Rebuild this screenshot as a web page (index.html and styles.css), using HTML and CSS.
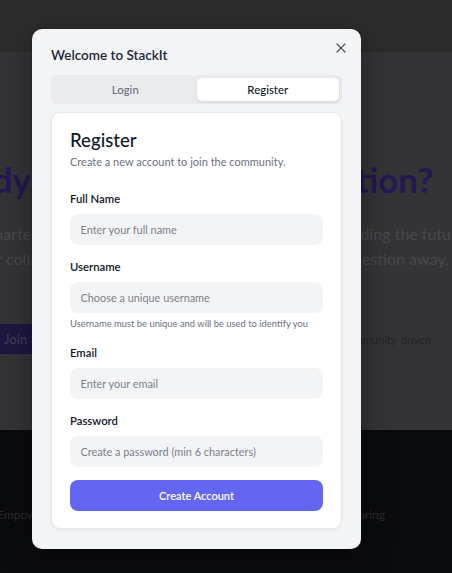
FILE: index.html
```html
<!DOCTYPE html>
<html lang="en">
<head>
<meta charset="utf-8">
<title>StackIt</title>
<link rel="stylesheet" href="styles.css">
</head>
<body>
<div class="page">
  <header class="site-header"></header>
  <section class="hero">
    <h1 class="hero-title cut-line">
      <span class="cut-start">Ready</span><span class="cut-mid">for your next</span><span class="cut-end">question?</span>
    </h1>
    <p class="hero-text">
      <span class="cut-line line-a"><span class="cut-start">Discover a smarter</span><span class="cut-mid">way to learn and share while</span><span class="cut-end">building the future of code</span></span>
      <span class="cut-line line-b"><span class="cut-start">Your collaborative</span><span class="cut-mid">learning journey is just one</span><span class="cut-end">question away.</span></span>
    </p>
    <div class="hero-actions">
      <a class="join-btn" href="#">Join StackIt</a>
      <span class="hero-note">Free, open and community-driven</span>
    </div>
  </section>
  <footer class="site-footer">
    <p class="footer-text cut-line"><span class="cut-start">Empowering</span><span class="cut-mid">developers through collaborative knowledge</span><span class="cut-end">sharing</span></p>
  </footer>
</div>

<div class="modal" role="dialog" aria-labelledby="modal-title">
  <button class="close-btn" aria-label="Close">
    <svg viewBox="0 0 24 24" width="16" height="16" fill="none" stroke="currentColor" stroke-width="1.8" stroke-linecap="round" stroke-linejoin="round"><path d="M18 6 6 18"/><path d="m6 6 12 12"/></svg>
  </button>
  <h2 class="modal-title" id="modal-title">Welcome to StackIt</h2>
  <div class="tabs">
    <button class="tab">Login</button>
    <button class="tab tab-active">Register</button>
  </div>
  <div class="card">
    <h3 class="card-title">Register</h3>
    <p class="card-sub">Create a new account to join the community.</p>
    <form class="form">
      <div class="field">
        <label class="label">Full Name</label>
        <input class="input" type="text" placeholder="Enter your full name">
      </div>
      <div class="field">
        <label class="label">Username</label>
        <input class="input" type="text" placeholder="Choose a unique username">
        <p class="help">Username must be unique and will be used to identify you</p>
      </div>
      <div class="field">
        <label class="label">Email</label>
        <input class="input" type="email" placeholder="Enter your email">
      </div>
      <div class="field">
        <label class="label">Password</label>
        <input class="input" type="password" placeholder="Create a password (min 6 characters)">
      </div>
      <button class="submit" type="button">Create Account</button>
    </form>
  </div>
</div>
</body>
</html>
```

FILE: styles.css
```css
* { box-sizing: border-box; }

html, body {
  margin: 0;
  padding: 0;
}

body {
  width: 452px;
  height: 573px;
  overflow: hidden;
  font-family: Lato, "Noto Sans", sans-serif;
  background: #0a0b0e;
  position: relative;
}

/* ---------- background page (dimmed by overlay) ---------- */
.page {
  display: flex;
  flex-direction: column;
  height: 573px;
  overflow: hidden;
}

.site-header {
  height: 52px;
  background: #2c2c2d;
}

.hero {
  height: 378px;
  background: #343437;
  padding-top: 106.5px;
  display: flex;
  flex-direction: column;
  overflow: hidden;
}

/* lines whose middle lies under the dialog */
.cut-line {
  display: flex;
  white-space: nowrap;
}

.cut-start {
  display: flex;
  justify-content: flex-end;
}

.cut-mid {
  display: flex;
  justify-content: center;
  overflow: hidden;
}

.cut-start, .cut-mid, .cut-end {
  flex: none;
}

.hero-title {
  margin: 0;
  font-size: 35px;
  line-height: 40px;
  font-weight: 700;
  color: #251752;
}

.hero-title .cut-start { width: 31px; }
.hero-title .cut-mid { width: 251px; }

.hero-text {
  margin: 22.5px 0 0;
  display: flex;
  flex-direction: column;
  font-size: 16px;
  line-height: 25px;
  color: #47474c;
}

.line-a .cut-start { width: 37px; }
.line-a .cut-mid { width: 298px; }

.line-b .cut-start { width: 96px; }
.line-b .cut-mid { width: 248px; }

.hero-actions {
  margin: 53.3px 21px 0 -14px;
  display: flex;
  align-items: center;
  justify-content: space-between;
}

.join-btn {
  height: 30px;
  padding: 0 18px;
  display: flex;
  align-items: center;
  background: #1e1740;
  color: #3c3955;
  font-size: 13px;
  font-weight: 600;
  text-decoration: none;
  border-radius: 6px;
}

.hero-note {
  font-size: 11px;
  color: #232327;
  white-space: nowrap;
}

.site-footer {
  flex: 1;
  background: #0a0b0e;
  padding-top: 77px;
  overflow: hidden;
}

.footer-text {
  margin: 0;
  font-size: 12px;
  line-height: 16px;
  color: #2a2b31;
}

.footer-text .cut-start { width: 63px; }
.footer-text .cut-mid { width: 284px; }

/* ---------- modal ---------- */
.modal {
  position: absolute;
  left: 32px;
  top: 29px;
  width: 329px;
  padding: 16px 19px 19.5px;
  background: #f3f4f6;
  border-radius: 10px;
  box-shadow: 0 10px 30px rgba(0, 0, 0, 0.35), 0 0 0 1px rgba(0, 0, 0, 0.08);
}

.close-btn {
  position: absolute;
  top: 10.8px;
  right: 11.7px;
  width: 16px;
  height: 16px;
  padding: 0;
  border: 0;
  background: none;
  color: #4b5563;
  display: flex;
}

.modal-title {
  margin: 0;
  font-size: 13.5px;
  line-height: 20px;
  font-weight: 600;
  color: #1f2937;
}

.tabs {
  margin-top: 10px;
  height: 29px;
  padding: 3px;
  display: grid;
  grid-template-columns: 1fr 1fr;
  background: #e9eaee;
  border-radius: 7px;
}

.tab {
  border: 0;
  background: transparent;
  font-family: inherit;
  font-size: 11.4px;
  font-weight: 500;
  color: #6b7280;
  border-radius: 5px;
  padding: 0;
}

.tab-active {
  background: #ffffff;
  color: #111827;
  box-shadow: 0 1px 3px rgba(0, 0, 0, 0.1);
}

.card {
  margin-top: 8px;
  background: #ffffff;
  border: 1px solid #e5e7eb;
  border-radius: 9px;
  padding: 16px 18px 17.5px;
  box-shadow: 0 1px 3px rgba(0, 0, 0, 0.06);
}

.card-title {
  margin: 0;
  font-size: 18.6px;
  line-height: 23px;
  font-weight: 500;
  color: #111827;
}

.card-sub {
  margin: 2.35px 0 0;
  font-size: 11px;
  line-height: 16px;
  color: #6b7280;
}

.form {
  margin-top: 20.6px;
  display: flex;
  flex-direction: column;
  gap: 14px;
}

.field {
  display: flex;
  flex-direction: column;
}

.label {
  font-size: 11.3px;
  line-height: 16px;
  font-weight: 600;
  color: #111827;
  margin-bottom: 7px;
}

.input {
  height: 31px;
  width: 100%;
  padding: 0 10.5px;
  border: 0;
  border-radius: 8px;
  background: #f3f4f6;
  font-family: inherit;
  font-size: 10.9px;
  color: #111827;
  outline: none;
}

.input::placeholder {
  color: #7b818d;
}

.help {
  margin: 4.5px 0 0;
  font-size: 9.4px;
  line-height: 14px;
  color: #6b7280;
}

.submit {
  margin-top: -1px;
  height: 30.5px;
  border: 0;
  border-radius: 8px;
  background: #6366f1;
  color: #ffffff;
  font-family: inherit;
  font-size: 11px;
  font-weight: 600;
}
```
